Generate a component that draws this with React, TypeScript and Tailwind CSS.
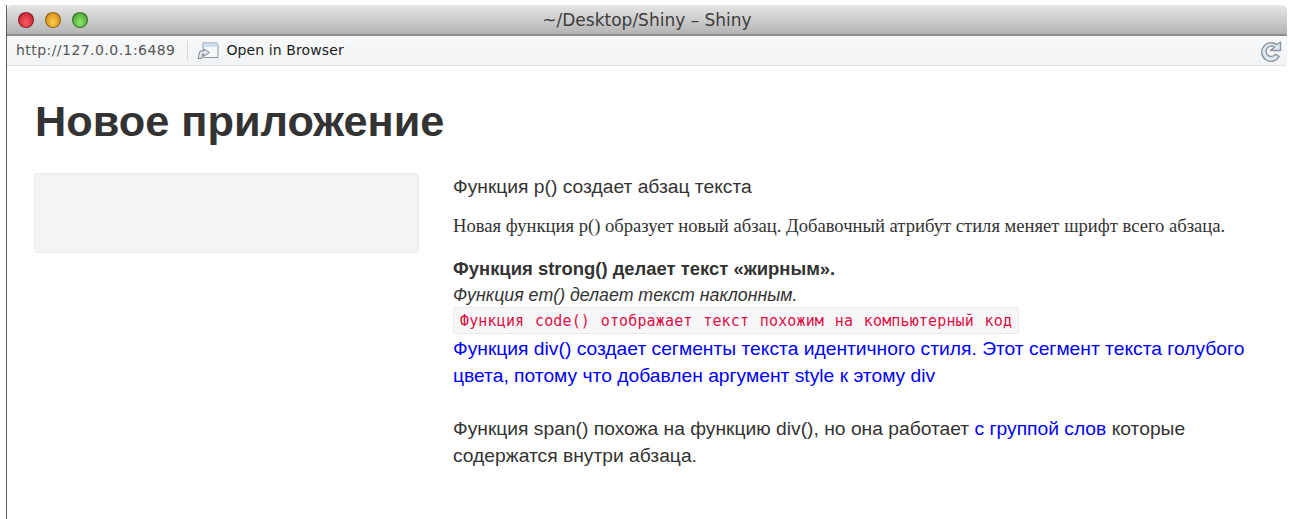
const sans = "font-['Liberation_Sans',Arial,sans-serif]";

function TrafficLight({ colors }: { colors: string }) {
  return (
    <span className={`h-4 w-4 rounded-full border border-black/35 bg-radial-[at_50%_65%] ${colors}`} />
  );
}

function BrowserIcon() {
  return (
    <svg width="22" height="19" viewBox="0 0 22 19" fill="none">
      {/* window with a pale blue top strip */}
      <path d="M6 2 H19 Q21 2 21 4 V16.5 H6 Z" fill="#f6f8fa" stroke="#8a939b" />
      <path d="M6.5 2.5 H20.5 V6 H6.5 Z" fill="#cfe0f0" />
      {/* arrow tab over the lower left corner */}
      <path d="M1 17.5 L3 10 H7 V8 L12.5 11.5 L7 15 V13 H5.5 L4.5 17.5 Z" fill="#e3e8ee" stroke="#7d8790" strokeLinejoin="round" />
    </svg>
  );
}

function ReloadIcon() {
  return (
    <svg width="22" height="22" viewBox="0 0 22 22" fill="none">
      <path
        d="M20.5 2 V10.5 H10.5 L14.5 7.2 A5.2 5.2 0 1 0 15.4 14.4 L19.2 16.4 A9.3 9.3 0 1 1 16.6 4.6 Z"
        fill="#dfe7f3"
        stroke="#8e969f"
        strokeWidth="1.4"
        strokeLinejoin="round"
      />
    </svg>
  );
}

export default function App() {
  return (
    <div className={`h-[519px] w-[1290px] overflow-hidden bg-white pl-[6px] pr-[3px] pt-[5px] ${sans}`}>
      <div className="flex h-[514px] flex-col border-l border-[#5c5c5c]">
        {/* title bar */}
        <div className="relative flex h-[31px] shrink-0 items-center gap-[11px] rounded-t-[5px] border-b-2 border-[#8f8f8f] bg-gradient-to-b from-[#e6e6e6] to-[#b4b4b4] pl-[11px]">
          <TrafficLight colors="from-[#ff5a5e] to-[#b5182a]" />
          <TrafficLight colors="from-[#ffcf4a] to-[#c97a0a]" />
          <TrafficLight colors="from-[#8ceb6a] to-[#3b8f25]" />
          <div className="absolute inset-x-0 top-[5px] text-center font-['DejaVu_Sans',sans-serif] text-[17px] leading-[20px] text-[#3d3d3d]">
            ~/Desktop/Shiny – Shiny
          </div>
        </div>

        {/* address bar */}
        <div className="flex h-[30px] shrink-0 items-center border-b border-[#e4e4e4] bg-gradient-to-b from-[#f7f9fa] to-[#f1f3f4] pl-[9px] pr-[5px] font-['DejaVu_Sans',sans-serif]">
          <span className="text-[14px] tracking-[0.45px] text-[#555]">http://127.0.0.1:6489</span>
          <span className="ml-[12px] h-[19px] w-px bg-[#d4d6d8]" />
          <span className="ml-[9px]">
            <BrowserIcon />
          </span>
          <span className="ml-[7px] text-[14px] tracking-[0.1px] text-[#1c1c1c]">Open in Browser</span>
          <span className="ml-auto">
            <ReloadIcon />
          </span>
        </div>

        {/* app body */}
        <div className="flex-1 bg-white pl-[27px] pr-[34px] pt-[32px] text-[#333]">
          <h1 className="pl-px text-[43.3px] font-bold leading-[46px]">Новое приложение</h1>

          <div className="mt-[29px] flex">
            <div className="h-[80px] w-[385px] shrink-0 rounded-[4px] border border-[#e8e8e8] bg-[#f4f4f4]" />

            <div className="ml-[34px] min-w-0 flex-1 text-[19.25px] leading-[27px]">
              <p>Функция p() создает абзац текста</p>
              <p className="mt-[12px] font-['Liberation_Serif',serif] text-[18.6px]">
                Новая функция p() образует новый абзац. Добавочный атрибут стиля меняет шрифт всего абзаца.
              </p>
              <div className="mt-[16px]">
                <strong className="block text-[18.45px]">Функция strong() делает текст «жирным».</strong>
                <em className="block text-[17.75px]">Функция em() делает текст наклонным.</em>
                <code className="mb-px -mt-[2px] block h-[27px] w-fit rounded-[3px] border border-[#e9e9e9] bg-[#f7f7f9] px-[6px] font-['DejaVu_Sans_Mono',monospace] text-[15px] leading-[26px] tracking-[0.15px] text-[#dd1144] [word-spacing:1.5px]">
                  Функция code() отображает текст похожим на компьютерный код
                </code>
              </div>
              <div className="text-[#0000ff]">
                Функция div() создает сегменты текста идентичного стиля. Этот сегмент текста голубого цвета, потому что добавлен аргумент style к этому div
              </div>
              <p className="mt-[26px]">
                Функция span() похожа на функцию div(), но она работает <span className="text-[#0000ff]">с группой слов</span> которые содержатся внутри абзаца.
              </p>
            </div>
          </div>
        </div>
      </div>
    </div>
  );
}
